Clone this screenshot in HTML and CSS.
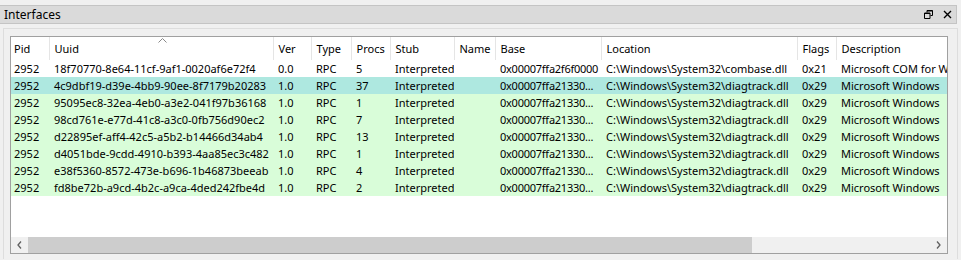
FILE: index.html
```html
<!DOCTYPE html>
<html lang="en">
<head>
    <meta charset="UTF-8">
    <title>Interfaces</title>
    <link rel="stylesheet" href="styles.css">
</head>
<body>

    <div class="titlebar">
        <span class="title">Interfaces</span>
        <div class="title-buttons">
            <svg width="9" height="9" viewBox="0 0 9 9">
                <path d="M3 0.5h5.5v5h-2M3 0.5v2M0.5 3h5.5v5.5h-5.5z" fill="none" stroke="#000" stroke-width="1"/>
                <path d="M3 1h5.5M0.5 3.5h5.5" stroke="#000" stroke-width="1.2"/>
            </svg>
            <svg width="9" height="9" viewBox="0 0 9 9">
                <path d="M1 1l7 7M8 1l-7 7" stroke="#000" stroke-width="1.4"/>
            </svg>
        </div>
    </div>

    <div class="panel">
        <div class="listbox">
            <div class="viewport">
                <table>
                    <colgroup>
                        <col style="width:38px"><col style="width:224px"><col style="width:38px">
                        <col style="width:40px"><col style="width:39px"><col style="width:64px">
                        <col style="width:41px"><col style="width:106px"><col style="width:196px">
                        <col style="width:39px"><col style="width:130px">
                    </colgroup>
                    <thead>
                        <tr>
                            <th>Pid</th>
                            <th class="sorted">Uuid
                                <svg class="sort-arrow" width="9" height="5" viewBox="0 0 9 5"><path d="M0.5 4.5l4-4 4 4" fill="none" stroke="#888" stroke-width="1"/></svg>
                            </th>
                            <th>Ver</th>
                            <th>Type</th>
                            <th>Procs</th>
                            <th>Stub</th>
                            <th>Name</th>
                            <th>Base</th>
                            <th>Location</th>
                            <th>Flags</th>
                            <th>Description</th>
                        </tr>
                    </thead>
                    <tbody id="rows"></tbody>
                </table>
            </div>
            <div class="hscroll">
                <div class="arrow">
                    <svg width="5" height="8" viewBox="0 0 5 8"><path d="M4 0.5l-3 3.5 3 3.5" fill="none" stroke="#606060" stroke-width="1.3"/></svg>
                </div>
                <div class="track"><div class="thumb"></div></div>
                <div class="arrow">
                    <svg width="5" height="8" viewBox="0 0 5 8"><path d="M1 0.5l3 3.5-3 3.5" fill="none" stroke="#606060" stroke-width="1.3"/></svg>
                </div>
            </div>
        </div>
    </div>

    <script>
        const rows = [
            ["18f70770-8e64-11cf-9af1-0020af6e72f4", "0.0", "5", "0x00007ffa2f6f0000", "combase.dll", "0x21", "Microsoft COM for Windows", ""],
            ["4c9dbf19-d39e-4bb9-90ee-8f7179b20283", "1.0", "37", "0x00007ffa21330...", "diagtrack.dll", "0x29", "Microsoft Windows", "active"],
            ["95095ec8-32ea-4eb0-a3e2-041f97b36168", "1.0", "1", "0x00007ffa21330...", "diagtrack.dll", "0x29", "Microsoft Windows", "green"],
            ["98cd761e-e77d-41c8-a3c0-0fb756d90ec2", "1.0", "7", "0x00007ffa21330...", "diagtrack.dll", "0x29", "Microsoft Windows", "green"],
            ["d22895ef-aff4-42c5-a5b2-b14466d34ab4", "1.0", "13", "0x00007ffa21330...", "diagtrack.dll", "0x29", "Microsoft Windows", "green"],
            ["d4051bde-9cdd-4910-b393-4aa85ec3c482", "1.0", "1", "0x00007ffa21330...", "diagtrack.dll", "0x29", "Microsoft Windows", "green"],
            ["e38f5360-8572-473e-b696-1b46873beeab", "1.0", "4", "0x00007ffa21330...", "diagtrack.dll", "0x29", "Microsoft Windows", "green"],
            ["fd8be72b-a9cd-4b2c-a9ca-4ded242fbe4d", "1.0", "2", "0x00007ffa21330...", "diagtrack.dll", "0x29", "Microsoft Windows", "green"]
        ];

        const tbody = document.getElementById("rows");
        rows.forEach(r => {
            const tr = document.createElement("tr");
            if (r[7]) tr.className = r[7];
            const cells = ["2952", r[0], r[1], "RPC", r[2], "Interpreted", "", r[3], "C:\\Windows\\System32\\" + r[4], r[5], r[6]];
            tr.innerHTML = cells.map(v => `<td>${v}</td>`).join('');
            tbody.appendChild(tr);
        });
    </script>

</body>
</html>
```

FILE: styles.css
```css
body {
    margin: 0;
    background-color: #f0f0f0;
    font-family: "Noto Sans", "Liberation Sans", sans-serif;
    font-size: 11px;
    color: #000;
}

.titlebar {
    margin-top: 5px;
    width: 956px;
    height: 17px;
    background-color: #dadada;
    border: 1px solid #c4c4c4;
    border-left: none;
    display: flex;
    align-items: center;
    justify-content: space-between;
}

.title {
    padding-left: 4px;
    font-size: 12px;
}

.title-buttons {
    display: flex;
    gap: 10px;
    padding-right: 4px;
}

.panel {
    margin: 4px 0 0 3px;
    width: 947px;
    height: 223px;
    border: 1px solid #dddddd;
    border-bottom: none;
    padding: 7px 0 0 6px;
}

.listbox {
    width: 936px;
    height: 216px;
    border: 1px solid #a0a0a0;
    background: white;
    display: flex;
    flex-direction: column;
}

.viewport {
    flex: 1;
    overflow: hidden;
}

table {
    border-collapse: collapse;
    table-layout: fixed;
    width: 955px;
}

th, td {
    text-align: left;
    white-space: nowrap;
    overflow: hidden;
    text-overflow: clip;
    padding: 0 0 0 5px;
    font-weight: normal;
}

th:first-child, td:first-child {
    padding-left: 3px;
}

td:nth-child(8) {
    letter-spacing: -0.25px;
}

th {
    height: 23px;
    border-right: 1px solid #e5e5e5;
    position: relative;
}

td {
    height: 17px;
}

.sort-arrow {
    position: absolute;
    left: 108px;
    top: 1px;
}

tr.active td {
    background-color: #aee8e0;
}

tr.green td {
    background-color: #d9fdd9;
}

.hscroll {
    height: 16px;
    background: #f0f0f0;
    display: flex;
    align-items: center;
}

.arrow {
    width: 17px;
    height: 16px;
    display: flex;
    align-items: center;
    justify-content: center;
}

.track {
    flex: 1;
    height: 16px;
}

.thumb {
    width: 724px;
    height: 16px;
    background: #cdcdcd;
}
```
